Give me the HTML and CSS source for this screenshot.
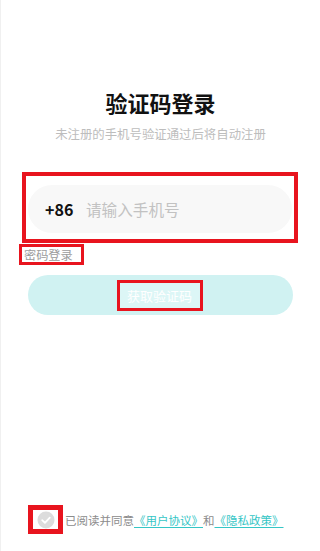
FILE: index.html
```html
<!DOCTYPE html>
<html lang="zh-CN">
<head>
<meta charset="utf-8">
<title>验证码登录</title>
<link rel="stylesheet" href="styles.css">
</head>
<body>
<div class="page">
  <main class="main">
    <h1 class="title">验证码登录</h1>
    <p class="subtitle">未注册的手机号验证通过后将自动注册</p>
    <div class="mark phone-mark">
      <div class="phone-pill">
        <span class="code">+86</span>
        <span class="placeholder">请输入手机号</span>
      </div>
    </div>
    <div class="mark pwd-mark"><span class="pwd">密码登录</span></div>
    <div class="btn">
      <span class="mark btn-mark">获取验证码</span>
    </div>
  </main>
  <footer class="agree">
    <span class="mark check-mark">
      <svg class="check" width="18" height="18" viewBox="0 0 18 18">
        <circle cx="9" cy="9" r="8.5" fill="#dcdcdc"/>
        <path d="M5.2 9.2 L7.9 11.8 L12.8 6.6" fill="none" stroke="#fff" stroke-width="1.8" stroke-linecap="round" stroke-linejoin="round"/>
      </svg>
    </span>
    <span class="agree-text">已阅读并同意</span><a class="link">《用户协议》</a><span class="agree-text">和</span><a class="link">《隐私政策》</a>
  </footer>
</div>
</body>
</html>
```
FILE: styles.css
```css
* { box-sizing: border-box; }
html, body { margin: 0; padding: 0; background: #fff; }
body {
  font-family: "Noto Sans CJK SC", "Noto Sans", sans-serif;
  width: 320px;
  height: 551px;
  overflow: hidden;
}
.page {
  width: 320px;
  height: 551px;
  display: flex;
  flex-direction: column;
  border-left: 1px solid #f0f0f0;
}
.main {
  flex: 1;
  display: flex;
  flex-direction: column;
  align-items: flex-start;
  padding-top: 86px;
}
.title {
  align-self: stretch;
  margin: 0;
  text-align: center;
  font-size: 22px;
  line-height: 32px;
  font-weight: 700;
  color: #111;
}
.subtitle {
  align-self: stretch;
  margin: 6px 0 0;
  text-align: center;
  font-size: 12.4px;
  line-height: 20px;
  color: #bdbdbd;
}
.mark {
  border: 4px solid #e8141e;
}
.phone-mark {
  margin: 28px 0 0 21px;
  width: 276px;
  height: 71px;
  padding: 9px 2px 0 2px;
}
.phone-pill {
  height: 48px;
  border-radius: 24px;
  background: #f8f8f8;
  display: flex;
  align-items: center;
  padding-left: 17px;
}
.code {
  font-size: 16px;
  font-weight: 700;
  color: #111;
  width: 41px;
}
.placeholder {
  font-size: 15.6px;
  color: #c2c2c2;
}
.pwd-mark {
  margin: 1px 0 0 18px;
  width: 65px;
  height: 21px;
  border-width: 3px;
  padding-left: 2px;
  display: flex;
  align-items: center;
}
.pwd {
  font-size: 12.2px;
  line-height: 14px;
  color: #9c9c9c;
  white-space: nowrap;
}
.btn {
  margin: 10px 0 0 27px;
  width: 265px;
  height: 40px;
  border-radius: 20px;
  background: #d0f2f2;
  display: flex;
  justify-content: center;
  align-items: center;
}
.btn-mark {
  border-width: 3px;
  height: 31px;
  width: 86px;
  margin-left: -2px;
  display: flex;
  align-items: center;
  justify-content: center;
  background: #dcf6f6;
  color: #fff;
  font-size: 13px;
}
.agree {
  display: flex;
  align-items: center;
  padding: 0 0 17px 27px;
  font-size: 11.5px;
  line-height: 16px;
}
.check-mark {
  border-width: 5px;
  width: 35px;
  height: 29px;
  display: flex;
  align-items: center;
  justify-content: center;
  margin-right: 2px;
}
.check { display: block; }
.agree-text { color: #8c8c8c; }
.link {
  color: #35c6c6;
  text-decoration: underline;
  text-underline-offset: 2px;
}
```
